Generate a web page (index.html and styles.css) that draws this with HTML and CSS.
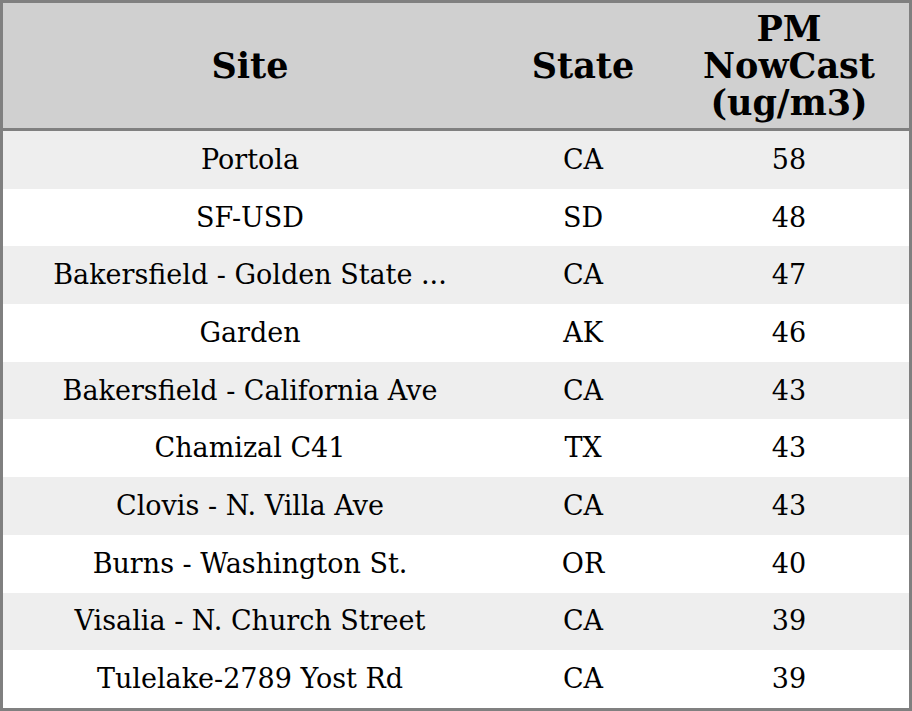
FILE: index.html
```html
<!DOCTYPE html>
<html>
<head>
<meta charset="utf-8">
<link rel="stylesheet" href="styles.css">
</head>
<body>
<table class="aq-table">
  <colgroup>
    <col class="col-site">
    <col class="col-state">
    <col class="col-pm">
  </colgroup>
  <thead>
    <tr>
      <th>Site</th>
      <th>State</th>
      <th>PM<br>NowCast<br>(ug/m3)</th>
    </tr>
  </thead>
  <tbody>
    <tr><td>Portola</td><td>CA</td><td>58</td></tr>
    <tr><td>SF-USD</td><td>SD</td><td>48</td></tr>
    <tr><td>Bakersfield - Golden State ...</td><td>CA</td><td>47</td></tr>
    <tr><td>Garden</td><td>AK</td><td>46</td></tr>
    <tr><td>Bakersfield - California Ave</td><td>CA</td><td>43</td></tr>
    <tr><td>Chamizal C41</td><td>TX</td><td>43</td></tr>
    <tr><td>Clovis - N. Villa Ave</td><td>CA</td><td>43</td></tr>
    <tr><td>Burns - Washington St.</td><td>OR</td><td>40</td></tr>
    <tr><td>Visalia - N. Church Street</td><td>CA</td><td>39</td></tr>
    <tr><td>Tulelake-2789 Yost Rd</td><td>CA</td><td>39</td></tr>
  </tbody>
</table>
</body>
</html>
```
FILE: styles.css
```css
html, body {
  margin: 0;
  padding: 0;
  background: #ffffff;
}
.aq-table {
  width: 912px;
  border-collapse: separate;
  border-spacing: 0;
  border: 3px solid #808080;
  font-family: "DejaVu Serif", serif;
  color: #000;
  table-layout: fixed;
}
.col-site { width: 494px; }
.col-state { width: 172px; }
.col-pm { width: 240px; }
.aq-table th {
  background: #d0d0d0;
  font-size: 35px;
  font-weight: bold;
  line-height: 37px;
  height: 125px;
  padding: 0;
  text-align: center;
  vertical-align: middle;
  border-bottom: 3px solid #808080;
}
.aq-table td {
  font-size: 27px;
  line-height: 30px;
  height: 57.7px;
  padding: 0;
  text-align: center;
  vertical-align: middle;
  white-space: nowrap;
}
.aq-table tbody tr:nth-child(odd) td {
  background: #eeeeee;
}
```
